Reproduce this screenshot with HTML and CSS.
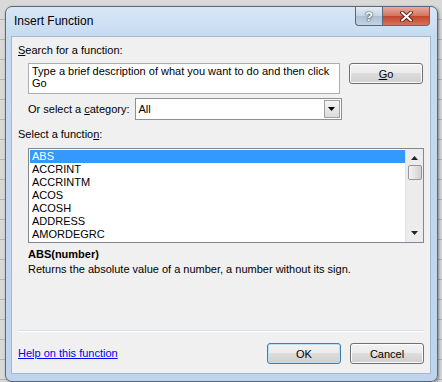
FILE: index.html
```html
<!DOCTYPE html>
<html lang="en">
<head>
    <meta charset="UTF-8">
    <title>Insert Function</title>
    <link rel="stylesheet" href="styles.css">
</head>
<body>

    <div class="window">
        <div class="titlebar">
            <span class="title">Insert Function</span>
            <div class="caption">
                <span class="cap help">?</span>
                <span class="cap close">
                    <svg width="13" height="11" viewBox="0 0 13 11">
                        <path d="M2 1.5 L11 9.5 M11 1.5 L2 9.5" stroke="#5a2418" stroke-width="3.8" stroke-linecap="round"/>
                        <path d="M2 1.5 L11 9.5 M11 1.5 L2 9.5" stroke="#fff" stroke-width="2" stroke-linecap="round"/>
                    </svg>
                </span>
            </div>
        </div>

        <div class="client">
            <div class="label"><u>S</u>earch for a function:</div>
            <div class="search-row">
                <div class="search-box">Type a brief description of what you want to do and then click Go</div>
                <button class="btn"><u>G</u>o</button>
            </div>

            <div class="category-row">
                <span>Or select a <u>c</u>ategory:</span>
                <div class="select">
                    <span class="select-value">All</span>
                    <span class="drop">
                        <svg width="7" height="4" viewBox="0 0 7 4"><path d="M0 0 H7 L3.5 4 Z" fill="#000"/></svg>
                    </span>
                </div>
            </div>

            <div class="label fn-label">Select a functio<u>n</u>:</div>
            <div class="listbox">
                <ul class="items">
                    <li class="selected">ABS</li>
                    <li>ACCRINT</li>
                    <li>ACCRINTM</li>
                    <li>ACOS</li>
                    <li>ACOSH</li>
                    <li>ADDRESS</li>
                    <li>AMORDEGRC</li>
                </ul>
                <div class="scrollbar">
                    <svg class="arrow" width="7" height="4" viewBox="0 0 7 4"><path d="M0 4 H7 L3.5 0 Z" fill="#222"/></svg>
                    <div class="thumb"></div>
                    <div class="track"></div>
                    <svg class="arrow" width="7" height="4" viewBox="0 0 7 4"><path d="M0 0 H7 L3.5 4 Z" fill="#222"/></svg>
                </div>
            </div>

            <div class="signature">ABS(number)</div>
            <div class="desc">Returns the absolute value of a number, a number without its sign.</div>

            <div class="footer">
                <hr class="sep">
                <div class="footer-row">
                    <a href="#" class="help-link">Help on this function</a>
                    <div class="buttons">
                        <button class="btn default">OK</button>
                        <button class="btn">Cancel</button>
                    </div>
                </div>
            </div>
        </div>
    </div>

</body>
</html>
```

FILE: styles.css
```css
body {
    margin: 0;
    padding: 6px 4px 0 5px;
    height: 382px;
    box-sizing: border-box;
    overflow: hidden;
    font-family: 'Liberation Sans', Arial, sans-serif;
    font-size: 11px;
    color: #000;
    background-color: #d9d9d9;
    background-image: repeating-linear-gradient(to bottom, transparent 0, transparent 19px, #b4b4b4 19px, #b4b4b4 20px);
}

.window {
    width: 433px;
    height: 376px;
    box-sizing: border-box;
    border: 1px solid #5b6878;
    border-radius: 7px;
    background: linear-gradient(to bottom, #d8e7f6, #c6daf0 30px, #bed4ed);
    padding: 0 7px 8px 6px;
    display: flex;
    flex-direction: column;
    box-shadow: 1px 1px 3px rgba(0, 0, 0, 0.4);
}

.titlebar {
    height: 30px;
    display: flex;
    align-items: flex-start;
}

.title {
    font-size: 12px;
    padding: 7px 0 0 2px;
    color: #000;
}

.caption {
    margin-left: auto;
    display: flex;
}

.cap {
    height: 19px;
    box-sizing: border-box;
    display: flex;
    align-items: center;
    justify-content: center;
    border: 1px solid #5b6878;
    border-top: none;
}

.help {
    width: 27px;
    border-right: none;
    border-radius: 0 0 0 4px;
    background: linear-gradient(to bottom, #e4ecf5, #c6d4e4 50%, #aebfd3 50%, #c3d3e4);
    color: #fff;
    font-weight: bold;
    font-size: 13px;
    text-shadow: 0 0 2px #333, 0 0 1px #333;
}

.close {
    width: 48px;
    border-radius: 0 0 4px 0;
    background: linear-gradient(to bottom, #e9a89b, #d4735f 50%, #c3432c 50%, #d5735c);
}

.client {
    flex: 1;
    background-color: #f0f0f0;
    outline: 1px solid #a6b8cc;
    padding: 7px 6px 9px 6px;
    display: flex;
    flex-direction: column;
    line-height: 13px;
}

.search-row {
    display: flex;
    align-items: flex-start;
    margin-top: 6px;
    padding-left: 10px;
}

.search-box {
    width: 312px;
    height: 31px;
    box-sizing: border-box;
    border: 1px solid #abadb3;
    background-color: #fff;
    padding: 1px 3px;
    line-height: 12px;
}

.btn {
    width: 74px;
    height: 21px;
    margin-left: 9px;
    font-family: 'Liberation Sans', Arial, sans-serif;
    font-size: 11px;
    color: #000;
    border: 1px solid #707070;
    border-radius: 3px;
    background: linear-gradient(to bottom, #f2f2f2, #ebebeb 50%, #dddddd 50%, #cfcfcf);
    box-shadow: inset 0 0 0 1px #fcfcfc;
    padding: 0;
}

.btn.default {
    border-color: #3c7fb1;
    box-shadow: inset 0 0 0 1px #b9e0f3;
}

.category-row {
    display: flex;
    align-items: center;
    margin-top: 4px;
    padding-left: 10px;
}

.select {
    margin-left: 5px;
    width: 207px;
    height: 22px;
    box-sizing: border-box;
    border: 1px solid #8e8f8f;
    background-color: #fff;
    display: flex;
    align-items: center;
}

.select-value {
    padding-left: 3px;
}

.drop {
    margin-left: auto;
    width: 16px;
    height: 18px;
    margin-right: 1px;
    box-sizing: border-box;
    border: 1px solid #a0a0a0;
    background: linear-gradient(to bottom, #f4f4f4, #dcdcdc);
    display: flex;
    align-items: center;
    justify-content: center;
}

.fn-label {
    margin-top: 8px;
}

.listbox {
    margin: 7px 0 0 10px;
    height: 95px;
    box-sizing: border-box;
    border: 1px solid #828790;
    background-color: #fff;
    display: flex;
    padding: 1px 0 1px 1px;
}

.items {
    list-style: none;
    margin: 0;
    padding: 0;
    flex: 1;
}

.items li {
    height: 13px;
    line-height: 13px;
    padding-left: 2px;
}

.items li.selected {
    background-color: #3399ff;
    color: #fff;
}

.scrollbar {
    width: 17px;
    margin-top: -1px;
    margin-bottom: -1px;
    background-color: #ececec;
    border-left: 1px solid #e3e3e3;
    display: flex;
    flex-direction: column;
    align-items: center;
}

.arrow {
    margin-top: 7px;
}

.thumb {
    width: 14px;
    height: 15px;
    margin-top: 5px;
    box-sizing: border-box;
    border: 1px solid #979797;
    border-radius: 2px;
    background: linear-gradient(to right, #f3f3f3, #e0e0e0 60%, #cfcfcf);
}

.track {
    flex: 1;
}

.scrollbar .arrow:last-child {
    margin: 0 0 7px 0;
}

.signature {
    margin: 4px 0 0 10px;
    font-weight: bold;
    line-height: 15px;
}

.desc {
    margin-left: 10px;
    line-height: 15px;
}

.footer {
    margin-top: auto;
}

.sep {
    margin: 0;
    border: none;
    border-top: 1px solid #d5dfe5;
    border-bottom: 1px solid #fff;
}

.footer-row {
    display: flex;
    align-items: center;
    margin-top: 11px;
}

.help-link {
    color: #0000ff;
}

.buttons {
    margin-left: auto;
    display: flex;
}
```
